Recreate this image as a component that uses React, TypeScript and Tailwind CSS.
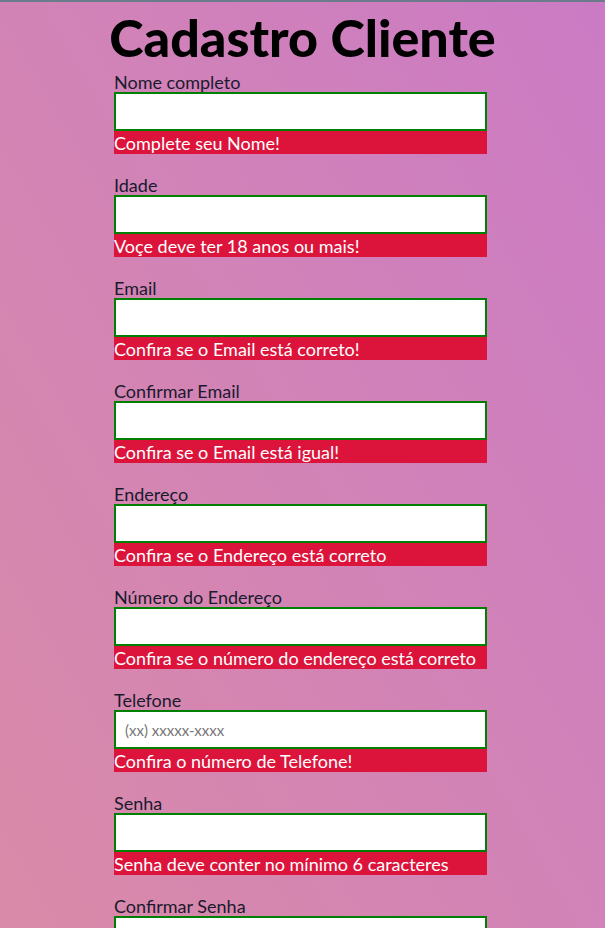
import React from 'react'

const fields = [
    { label: 'Nome completo', error: 'Complete seu Nome!' },
    { label: 'Idade', error: 'Voçe deve ter 18 anos ou mais!' },
    { label: 'Email', error: 'Confira se o Email está correto!' },
    { label: 'Confirmar Email', error: 'Confira se o Email está igual!' },
    { label: 'Endereço', error: 'Confira se o Endereço está correto' },
    { label: 'Número do Endereço', error: 'Confira se o número do endereço está correto' },
    { label: 'Telefone', error: 'Confira o número de Telefone!', placeholder: '(xx) xxxxx-xxxx' },
    { label: 'Senha', error: 'Senha deve conter no mínimo 6 caracteres' },
    { label: 'Confirmar Senha', error: 'Confirme sua senha!' },
]

export default function App() {
    return (
        <div
            className="min-h-screen border-t-2 border-[#6b7b8c] bg-gradient-to-tr from-[#da8ba6] to-[#cb7bc4] pb-10 text-black"
            style={{ fontFamily: 'Lato, "Noto Sans", sans-serif' }}
        >
            <h1 className="h-[71px] pt-[5px] text-center text-[52px] font-black leading-[60px]">Cadastro Cliente</h1>

            <form className="mx-auto w-[373px] -translate-x-[2px]">
                {fields.map((f) => (
                    <div key={f.label} className="mb-[22px]">
                        <label className="block h-[19px] text-[18px] leading-[19px] text-[#1a1a2e]">{f.label}</label>
                        <input
                            type="text"
                            placeholder={f.placeholder}
                            className="block h-[39px] w-full border-2 border-[#008000] bg-white px-[9px] text-[15px] outline-none placeholder:text-[#777]"
                        />
                        <div className="h-[23px] bg-[#dc143c] text-[18px] leading-[24px] text-white">{f.error}</div>
                    </div>
                ))}
            </form>
        </div>
    )
}
